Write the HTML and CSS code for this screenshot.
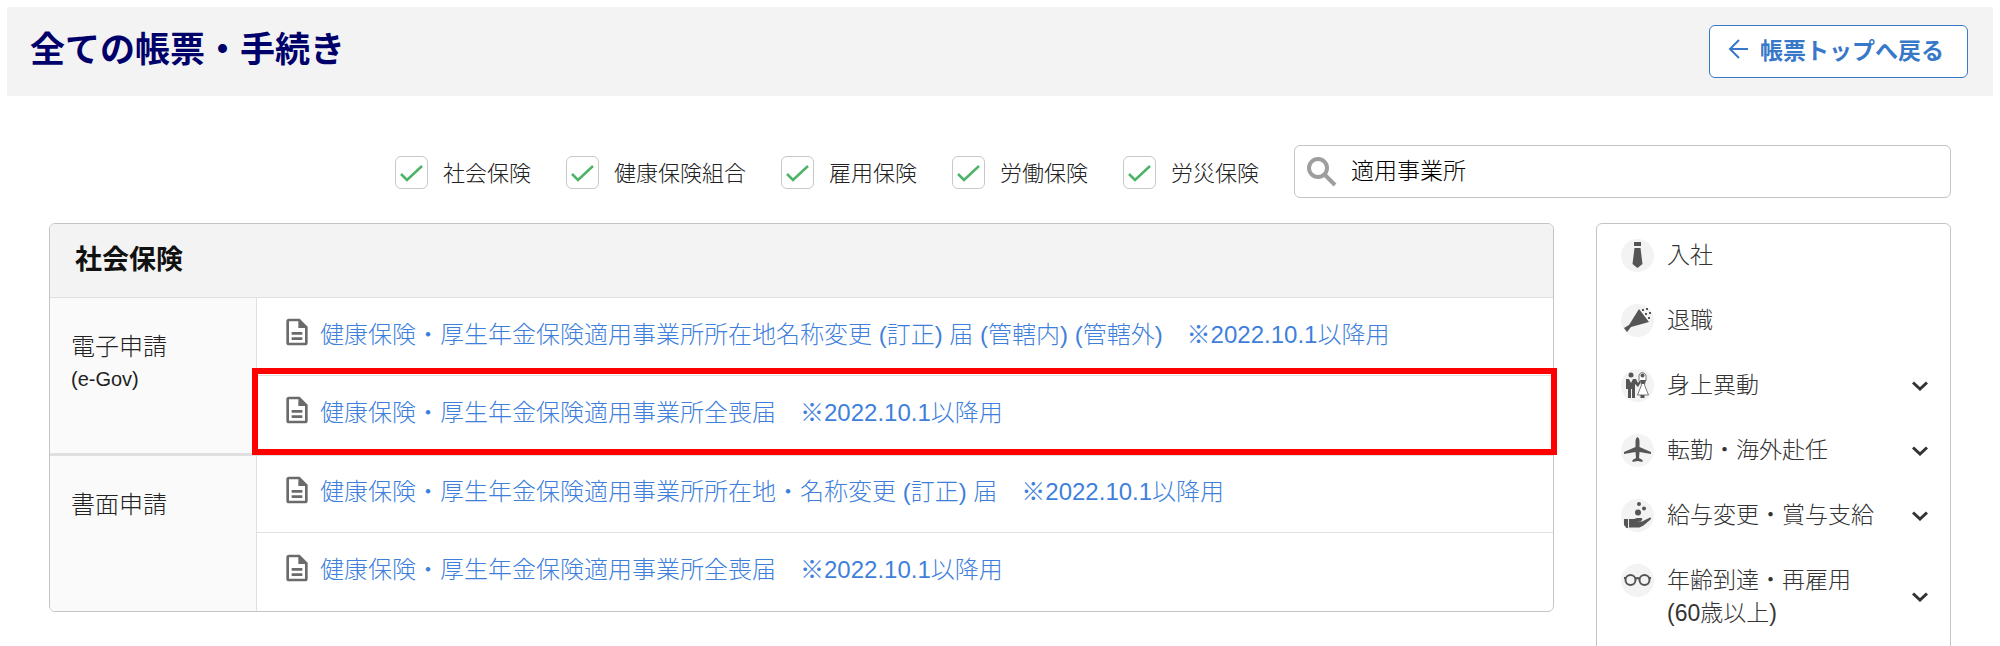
FILE: index.html
```
<!DOCTYPE html>
<html lang="ja">
<head>
    <meta charset="UTF-8">
    <meta name="viewport" content="width=device-width, initial-scale=1.0">
    <title>全ての帳票・手続き</title>
    <link rel="stylesheet" href="styles.css">
</head>
<body>
    <svg class="sprite" aria-hidden="true">
        <symbol id="doc" viewBox="0 0 24 24">
            <path fill="currentColor" fill-rule="evenodd" d="M6 2h8l6 6v12a2 2 0 0 1-2 2H6a2 2 0 0 1-2-2V4a2 2 0 0 1 2-2zM6 4v16h12V9h-5V4zM8 12h8v2H8zM8 16h8v2H8z"/>
        </symbol>
        <symbol id="chevron" viewBox="0 0 16 10">
            <path fill="none" stroke="currentColor" stroke-width="3" d="M1 1.500L8 8l7-6.500"/>
        </symbol>
    </svg>

    <header class="page-header">
        <h1>全ての帳票・手続き</h1>
        <button type="button" class="back-button">
            <svg class="arrow" viewBox="0 0 20 20" aria-hidden="true"><path d="M20 10H2M11 1l-9 9 9 9"/></svg>
            帳票トップへ戻る
        </button>
    </header>

    <main class="content">
        <form class="filters">
            <label class="check"><input type="checkbox" checked><span>社会保険</span></label>
            <label class="check"><input type="checkbox" checked><span>健康保険組合</span></label>
            <label class="check"><input type="checkbox" checked><span>雇用保険</span></label>
            <label class="check"><input type="checkbox" checked><span>労働保険</span></label>
            <label class="check"><input type="checkbox" checked><span>労災保険</span></label>
            <div class="search">
                <svg class="search-icon" viewBox="0 0 30 30" aria-hidden="true"><circle cx="11" cy="11" r="9"/><path d="M17.500 17.500L28 28"/></svg>
                <input type="text" aria-label="帳票を検索" value="適用事業所">
            </div>
        </form>

        <div class="columns">
            <section class="card">
                <h2>社会保険</h2>
                <table class="forms">
                    <tbody>
                        <tr>
                            <th rowspan="2" scope="rowgroup">電子申請<small>(e-Gov)</small></th>
                            <td><a href="#"><svg class="doc" aria-hidden="true"><use href="#doc"/></svg>健康保険・厚生年金保険適用事業所所在地名称変更 (訂正) 届 (管轄内) (管轄外)　※2022.10.1以降用</a></td>
                        </tr>
                        <tr>
                            <td class="highlight"><a href="#"><svg class="doc" aria-hidden="true"><use href="#doc"/></svg>健康保険・厚生年金保険適用事業所全喪届　※2022.10.1以降用</a></td>
                        </tr>
                    </tbody>
                    <tbody>
                        <tr>
                            <th rowspan="2" scope="rowgroup">書面申請</th>
                            <td><a href="#"><svg class="doc" aria-hidden="true"><use href="#doc"/></svg>健康保険・厚生年金保険適用事業所所在地・名称変更 (訂正) 届　※2022.10.1以降用</a></td>
                        </tr>
                        <tr>
                            <td><a href="#"><svg class="doc" aria-hidden="true"><use href="#doc"/></svg>健康保険・厚生年金保険適用事業所全喪届　※2022.10.1以降用</a></td>
                        </tr>
                    </tbody>
                </table>
            </section>

            <nav class="events">
                <a href="#" class="event">
                    <svg class="event-icon" viewBox="0 0 33 33" aria-hidden="true">
                        <path d="M13 3h7v4h-7zM13.500 9h6l2 16-5 4-5-4z"/>
                    </svg>
                    <span>入社</span>
                </a>
                <a href="#" class="event">
                    <svg class="event-icon" viewBox="0 0 33 33" aria-hidden="true">
                        <path d="M18 5l10 13-18 5-4 5-3-4 5-3z"/>
                        <path d="M21 5h2v2h-2zM25 4h2v2h-2zM24 9h2v2h-2zM28 8h2v2h-2zM27 13h2v2h-2z"/>
                    </svg>
                    <span>退職</span>
                </a>
                <button type="button" class="event">
                    <svg class="event-icon" viewBox="0 0 33 33" aria-hidden="true">
                        <circle cx="10" cy="6" r="2.500"/>
                        <path d="M5 10h3l2 4 2-4h3l2 4 2-3 1 2-3 5-3-3v14h-3v-9h-1v9H7V20H5z"/>
                        <path class="dress" d="M18 12V6q3-5 7 0v6M19.500 11l1 5-4 10h11l-4-10 1-5"/>
                        <circle cx="21.500" cy="6.500" r="2"/>
                        <path d="M19.500 11h5l-1 4h-3zM19.500 26h4v3h-4z"/>
                    </svg>
                    <span>身上異動</span>
                    <svg class="chevron" aria-hidden="true"><use href="#chevron"/></svg>
                </button>
                <button type="button" class="event">
                    <svg class="event-icon" viewBox="0 0 33 33" aria-hidden="true">
                        <path d="M16.500 3q2 1 2 4v6l11.500 5v2l-11.500-2-.5 6 3.500 2v2l-5-1-5 1v-2l3.500-2-.5-6L3 20v-2l11.500-5V7q0-3 2-4z"/>
                    </svg>
                    <span>転勤・海外赴任</span>
                    <svg class="chevron" aria-hidden="true"><use href="#chevron"/></svg>
                </button>
                <button type="button" class="event">
                    <svg class="event-icon" viewBox="0 0 33 33" aria-hidden="true">
                        <circle cx="18" cy="5" r="2"/><circle cx="23" cy="9.500" r="2"/><circle cx="17" cy="13.500" r="3"/>
                        <path d="M3 20h4v9H3zM8 20h5l3-1h5q1 2-1 3h-4l5 .5 8-4q2 0 .5 2l-7 6-4 2H8z"/>
                    </svg>
                    <span>給与変更・賞与支給</span>
                    <svg class="chevron" aria-hidden="true"><use href="#chevron"/></svg>
                </button>
                <button type="button" class="event">
                    <svg class="event-icon" viewBox="0 0 33 33" aria-hidden="true">
                        <g class="line"><circle cx="9.500" cy="16" r="5"/><circle cx="23.500" cy="16" r="5"/><path d="M14.500 15q2-2 4 0M3 14h2M28 14h2"/></g>
                    </svg>
                    <span>年齢到達・再雇用<br>(60歳以上)</span>
                    <svg class="chevron" aria-hidden="true"><use href="#chevron"/></svg>
                </button>
            </nav>
        </div>
    </main>
</body>
</html>
```
FILE: styles.css
```
* {
    box-sizing: border-box;
}
html {
    overflow: hidden;
}
body {
    height: 100vh;
    margin: 0;
    padding: 7px;
    overflow: hidden;
    background-color: #fff;
    color: #222;
    font-family: "Liberation Sans", "Noto Sans CJK JP", sans-serif;
    font-size: 22px;
    font-weight: 300;
}
button,
input {
    font: inherit;
    color: inherit;
}
a {
    text-decoration: none;
}
.sprite {
    display: none;
}

/* header */
.page-header {
    display: flex;
    justify-content: space-between;
    align-items: flex-start;
    padding: 18px 25px 18px 23px;
    background-color: #f3f3f3;
}
.page-header h1 {
    margin: 0;
    color: #00006b;
    font-size: 35px;
    line-height: 50px;
}
.back-button {
    display: flex;
    align-items: center;
    gap: 12px;
    height: 53px;
    padding: 0 23px 5px 18px;
    border: 1px solid #3878c8;
    border-radius: 6px;
    background-color: #fff;
    color: #3878c8;
    font-size: 23px;
    font-weight: bold;
    cursor: pointer;
}
.arrow {
    width: 20px;
    height: 20px;
    fill: none;
    stroke: currentColor;
    stroke-width: 2;
}

/* filters */
.content {
    padding: 49px 42px 0;
}
.filters {
    display: flex;
    align-items: center;
    gap: 35px;
    padding-left: 346px;
}
.check {
    display: flex;
    align-items: center;
    gap: 15px;
    padding-top: 2px;
    white-space: nowrap;
}
.check span {
    padding-bottom: 4px;
}
.check input {
    width: 33px;
    height: 33px;
    margin: 0;
    border: 1px solid #c8c8c8;
    border-radius: 6px;
    appearance: none;
    background: #fff url("data:image/svg+xml,%3Csvg xmlns='http://www.w3.org/2000/svg' viewBox='0 0 31 31'%3E%3Cpath d='M5 17l6 6L26 9' fill='none' stroke='%234db366' stroke-width='2.500'/%3E%3C/svg%3E") center no-repeat;
}
.search {
    display: flex;
    flex: 1;
    align-items: center;
    gap: 14px;
    height: 53px;
    padding: 0 12px;
    border: 1px solid #c4c4c4;
    border-radius: 6px;
}
.search-icon {
    width: 30px;
    height: 30px;
    fill: none;
    stroke: #9e9e9e;
    stroke-width: 4;
}
.search input {
    flex: 1;
    min-width: 0;
    padding: 0 0 6px;
    border: 0;
    outline: 0;
    background: none;
    color: #000;
    font-size: 23px;
}

/* form list */
.columns {
    display: flex;
    align-items: flex-start;
    gap: 42px;
    margin-top: 25px;
}
.card {
    flex: 1;
    border: 1px solid #c4c4c4;
    border-radius: 6px;
}
.card h2 {
    margin: 0;
    padding: 0 25px;
    border-radius: 5px 5px 0 0;
    background-color: #f3f3f3;
    color: #111;
    font-size: 27px;
    line-height: 73px;
}
.forms {
    width: 100%;
    border-spacing: 0;
    font-size: 24px;
}
.forms th {
    width: 207px;
    padding: 32px 21px;
    border-top: 1px solid #e0e0e0;
    border-right: 1px solid #e0e0e0;
    background-color: #fafafa;
    font-weight: 300;
    line-height: 33px;
    text-align: left;
    vertical-align: top;
}
.forms small {
    display: block;
    font-size: 20px;
    line-height: 32px;
}
.forms td {
    height: 78px;
    padding: 0 24px 9px;
    border-top: 1px solid #e0e0e0;
}
.forms tbody + tbody td {
    height: 79px;
}
.forms tbody + tbody tr:first-child > * {
    border-top-width: 3px;
}
.forms tbody:last-child th {
    border-bottom-left-radius: 5px;
}
.forms a {
    display: flex;
    align-items: center;
    gap: 7px;
    color: #3f7fdc;
}
.doc {
    width: 32px;
    height: 32px;
    color: #6b6b6b;
}
.highlight {
    position: relative;
}
.highlight::after {
    content: "";
    position: absolute;
    inset: -8px -4px -2px -5px;
    border: 6px solid #f00;
    pointer-events: none;
}

/* life events */
.events {
    width: 355px;
    padding-bottom: 32px;
    border: 1px solid #c4c4c4;
    border-radius: 6px;
}
.event {
    display: flex;
    align-items: flex-start;
    gap: 13px;
    width: 100%;
    padding: 15px 22px 17px 24px;
    border: 0;
    background: none;
    color: #333;
    font-size: 23px;
    line-height: 33px;
    text-align: left;
}
.event span {
    flex: 1;
}
.event-icon {
    width: 33px;
    height: 33px;
    border-radius: 50%;
    background-color: #f3f3f3;
    fill: #555;
}
.event-icon .line {
    fill: none;
    stroke: #555;
    stroke-width: 2;
}
.event-icon .dress {
    fill: #fff;
    stroke: #777;
    stroke-width: 1;
}
.chevron {
    align-self: center;
    width: 16px;
    height: 10px;
}
```
